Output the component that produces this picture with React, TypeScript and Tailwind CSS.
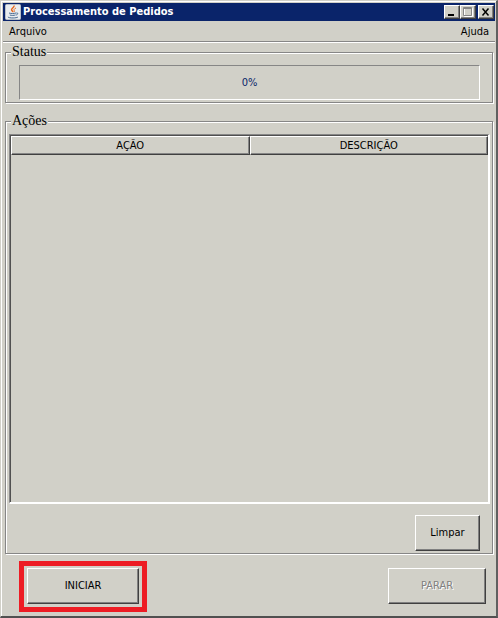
import type { ReactNode } from "react";

const columns = ["AÇÃO", "DESCRIÇÃO"];

const JavaIcon = () => (
  <svg width="16" height="16" viewBox="0 0 16 16" fill="none" aria-hidden="true">
    <rect x="0.5" y="0.5" width="15" height="15" rx="1" fill="#e9edf0" stroke="#b8bfc8" />
    <path d="M9 1.500c.8 2-3.200 3-2.400 4.600.3.800 1.200 1.200 1.400 2" stroke="#e8661c" strokeWidth="1.500" />
    <path d="M11 4c-2 .9-2.500 1.800-1.700 2.700.4.500.2 1-.3 1.400" stroke="#e8762c" />
    <path d="M4 9c2 .7 5 .6 7 0M4.800 11c1.700.6 4.200.5 5.700 0" stroke="#46688f" />
    <path d="M11.300 9c1.900-.5 2 1.300-.1 2.100" stroke="#46688f" />
    <path d="M3 12.800c-.5 1.400 8.500 1.600 10 .2" stroke="#46688f" />
  </svg>
);

const CaptionButton = ({ label, children }: { label: string; children: ReactNode }) => (
  <button
    type="button"
    aria-label={label}
    className="flex h-3.5 w-4 items-center justify-center border border-t-white border-l-white border-r-[#404040] border-b-[#404040] bg-[#d1d0c8] shadow-[inset_-1px_-1px_0_#808080]"
  >
    {children}
  </button>
);

const PushButton = ({
  className,
  disabled,
  children,
}: {
  className: string;
  disabled?: boolean;
  children: ReactNode;
}) => (
  <button
    type="button"
    disabled={disabled}
    className={`h-9 border border-t-white border-l-white border-r-[#404040] border-b-[#404040] shadow-[inset_-1px_-1px_0_#808080] disabled:text-[#808080] disabled:[text-shadow:1px_1px_0_#fff] ${className}`}
  >
    {children}
  </button>
);

const Group = ({
  title,
  className,
  children,
}: {
  title: string;
  className?: string;
  children: ReactNode;
}) => (
  <fieldset
    className={`min-w-0 border border-[#868686] pt-[5px] pr-0.5 pb-0.5 pl-[3px] shadow-[1px_1px_0_#fff,inset_1px_1px_0_#fff] ${className ?? ""}`}
  >
    <legend className="ml-0.5 bg-[#d1d0c8] px-px font-['Liberation_Serif',serif] text-sm leading-4">
      {title}
    </legend>
    {children}
  </fieldset>
);

const App = () => {
  const progress = 0;

  return (
    <div className="flex min-h-screen flex-col border-t border-r-2 border-b-2 border-l border-t-[#d1d0c8] border-r-[#606060] border-b-[#505050] border-l-[#d1d0c8] bg-[#d1d0c8] font-['DejaVu_Sans_Condensed','DejaVu_Sans',sans-serif] text-[11px] leading-4 text-black">
      <div className="flex flex-1 flex-col border-t border-l border-white pt-px pr-px pl-px">
        <header className="flex h-[18px] items-center bg-[#0a246a] pr-px pl-0.5 text-white">
          <JavaIcon />
          <h1 className="flex-1 pl-0.5 font-bold">Processamento de Pedidos</h1>
          <CaptionButton label="Minimizar">
            <svg width="12" height="10" aria-hidden="true">
              <path d="M2 7h6v2H2z" fill="#000" />
            </svg>
          </CaptionButton>
          <CaptionButton label="Maximizar">
            <svg width="12" height="10" fill="none" aria-hidden="true">
              <path d="M2.500 1.500h8v8h-8z" stroke="#fff" />
              <path d="M1.500.5h8v8h-8zM1 1.500h9" stroke="#868686" />
            </svg>
          </CaptionButton>
          <div className="ml-0.5 flex">
            <CaptionButton label="Fechar">
              <svg width="12" height="10" fill="none" aria-hidden="true">
                <path d="M2.500 1.500l6 7M8.500 1.500l-6 7" stroke="#000" strokeWidth="1.500" />
              </svg>
            </CaptionButton>
          </div>
        </header>

        <nav className="flex h-[22px] items-start justify-between border-b border-white px-1.5 pt-[3px] shadow-[inset_0_-1px_0_#868686]">
          <button type="button">Arquivo</button>
          <button type="button">Ajuda</button>
        </nav>

        <main className="flex flex-1 flex-col px-0.5 pt-px pb-1">
          <Group title="Status">
            <div
              role="progressbar"
              aria-label="Status"
              aria-valuenow={progress}
              aria-valuemin={0}
              aria-valuemax={100}
              className="mx-2.5 flex h-[35px] items-center justify-center border border-t-[#868686] border-r-white border-b-white border-l-[#868686] text-[#0a246a]"
            >
              {progress}%
            </div>
          </Group>

          <Group title="Ações" className="mt-2.5">
            <div className="flex min-h-[calc(100vh-248px)] border-t border-r-2 border-b-2 border-l border-t-[#868686] border-r-white border-b-white border-l-[#868686]">
              <div className="flex-1 border-t border-l border-[#505050]">
                <table className="w-full table-fixed border-separate border-spacing-0">
                  <thead>
                    <tr>
                      {columns.map((column) => (
                        <th
                          key={column}
                          scope="col"
                          className="h-[19px] border border-t-white border-r-[#404040] border-b-[#404040] border-l-white p-0 font-normal shadow-[inset_-1px_-1px_0_#868686]"
                        >
                          {column}
                        </th>
                      ))}
                    </tr>
                  </thead>
                  <tbody />
                </table>
              </div>
            </div>
            <div className="mt-[11px] flex justify-end pr-2.5">
              <PushButton className="w-[65px]">Limpar</PushButton>
            </div>
          </Group>

          <footer className="mt-[7px] flex items-start justify-between pr-[7px] pl-3.5">
            <div className="border-5 border-[#ed1c24] px-[3px] pt-0.5 pb-[3px]">
              <PushButton className="w-28">INICIAR</PushButton>
            </div>
            <PushButton className="mt-[7px] w-[98px]" disabled>
              PARAR
            </PushButton>
          </footer>
        </main>
      </div>
    </div>
  );
};

export default App;
